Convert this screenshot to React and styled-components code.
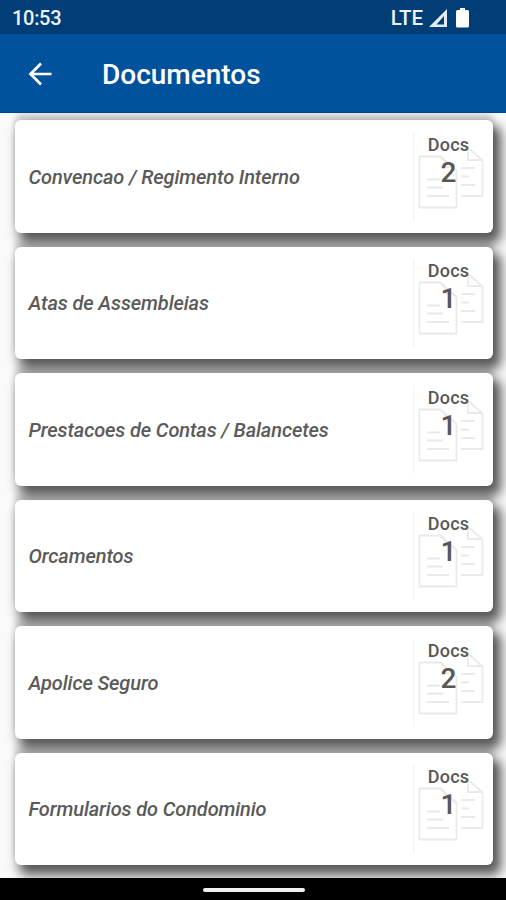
import React from 'react'
import styled, { createGlobalStyle } from 'styled-components'

const GlobalStyle = createGlobalStyle`
    * {
        box-sizing:border-box;
    }
    body {
        margin:0;
        font-family:Roboto, "Noto Sans", sans-serif;
        background-color:#fafafa;
    }
`
const Container = styled.div`
    display:flex;
    flex-direction:column;
    height:900px;
    width:506px;
    overflow:hidden;
`
const StatusBar = styled.div`
    display:flex;
    align-items:center;
    justify-content:space-between;
    height:34px;
    flex-shrink:0;
    padding:2px 37px 0 12px;
    background-color:#003e75;
    color:#eef1fb;
    font-size:20px;
    font-weight:500;
`
const Clock = styled.span`
    letter-spacing:-0.3px;
`
const StatusIcons = styled.div`
    display:flex;
    align-items:center;
    height:32px;
`
const Network = styled.span`
    font-size:20.5px;
    letter-spacing:-0.1px;
    margin-right:6px;
`
const BatteryIcon = styled.svg`
    margin-left:9px;
`
const AppBar = styled.div`
    display:flex;
    align-items:center;
    height:79px;
    flex-shrink:0;
    padding-left:28px;
    background-color:#00529c;
    border-bottom:1px solid #004390;
    color:white;
`
const BackIcon = styled.svg`
    margin-top:1px;
`
const Title = styled.div`
    font-size:28px;
    font-weight:500;
    line-height:32px;
    margin:3px 0 0 50px;
`
const List = styled.div`
    display:flex;
    flex-direction:column;
    flex:1;
    gap:14px;
    padding:7.4px 13.5px 0 14.5px;
    overflow:hidden;
`
const Card = styled.div`
    display:flex;
    align-items:center;
    height:112.5px;
    flex-shrink:0;
    border-radius:6px;
    background-color:white;
    box-shadow:6px 8px 12px 2px rgba(0, 0, 0, 0.66), 0 -6px 6px 0 rgba(0, 0, 0, 0.18);
`
const Name = styled.div`
    flex:1;
    padding-left:14px;
    font-size:20px;
    font-weight:500;
    font-style:italic;
    letter-spacing:-0.12px;
    color:#5a5a5a;
`
const Count = styled.div`
    display:grid;
    justify-items:center;
    align-items:start;
    width:80px;
    height:88px;
    border-left:1px solid #f3f3f3;
`
const Pages = styled.svg`
    grid-area:1 / 1;
    width:68px;
    height:66px;
    margin:12px 0 0 -8px;
`
const Labels = styled.div`
    grid-area:1 / 1;
    z-index:1;
    width:70px;
    margin-right:12px;
    text-align:center;
    color:#575757;
`
const Label = styled.div`
    font-size:18px;
    font-weight:500;
    line-height:24px;
    letter-spacing:0.2px;
`
const Number = styled.div`
    font-size:28px;
    font-weight:500;
    line-height:32px;
`
const NavBar = styled.div`
    display:flex;
    align-items:center;
    justify-content:center;
    height:22px;
    flex-shrink:0;
    padding-top:2px;
    background-color:black;
    z-index:1;
`
const Handle = styled.div`
    width:102px;
    height:4px;
    margin-left:1px;
    border-radius:2px;
    background-color:#f0f0f0;
`

const documents = [
    { name: "Convencao / Regimento Interno", count: 2 },
    { name: "Atas de Assembleias", count: 1 },
    { name: "Prestacoes de Contas / Balancetes", count: 1 },
    { name: "Orcamentos", count: 1 },
    { name: "Apolice Seguro", count: 2 },
    { name: "Formularios do Condominio", count: 1 },
]

function PagesIcon() {
    return (
        <Pages viewBox="0 0 68 66" fill="none" stroke="#eaeaea" strokeWidth="1.800">
            <path d="M2.500 11.500h20.500L39.500 26v36.500h-37z" />
            <path d="M23 11.500c4 1 6 4 5.500 11c5-1 9 0 11 3.500" />
            <path d="M10 34.500h13M10 42.500h16M10 51h22" />
            <path d="M46 4l5-1.500L65.500 15.500V51H44" />
            <path d="M51 2.500v12.500h14.500" />
            <path d="M44 23h14M44 31.500h8M44 40h14" />
        </Pages>
    )
}

function App() {
    return (
        <>
            <GlobalStyle />
            <Container>
                <StatusBar>
                    <Clock>10:53</Clock>
                    <StatusIcons>
                        <Network>LTE</Network>
                        <svg width="18" height="18" viewBox="0 0 18 18">
                            <path fill="#e6eaf8" fillRule="evenodd" d="M0 18L18 0v18zM7.500 15.500h7.500V7z" />
                        </svg>
                        <BatteryIcon width="13" height="20" viewBox="0 0 13 20">
                            <path fill="white" d="M4 0h5v2h2.500q1.500 0 1.500 1.500v14.500q0 1.500-1.500 1.500h-10q-1.500 0-1.500-1.500V3.500Q0 2 1.500 2H4z" />
                        </BatteryIcon>
                    </StatusIcons>
                </StatusBar>
                <AppBar>
                    <BackIcon width="24" height="24" viewBox="0 0 24 24" fill="none" stroke="white" strokeWidth="2.700">
                        <path d="M23.500 12H2.500M13 1.500L2.500 12L13 22.500" />
                    </BackIcon>
                    <Title>Documentos</Title>
                </AppBar>
                <List>
                    {documents.map((doc) => (
                        <Card key={doc.name}>
                            <Name>{doc.name}</Name>
                            <Count>
                                <PagesIcon />
                                <Labels>
                                    <Label>Docs</Label>
                                    <Number>{doc.count}</Number>
                                </Labels>
                            </Count>
                        </Card>
                    ))}
                </List>
                <NavBar>
                    <Handle />
                </NavBar>
            </Container>
        </>
    )
}

export default App
